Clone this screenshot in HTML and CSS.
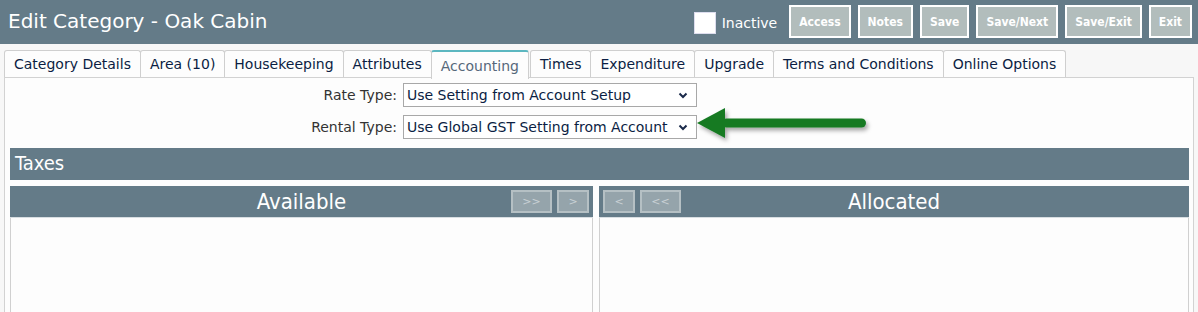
FILE: index.html
```html
<!DOCTYPE html>
<html lang="en">
<head>
    <meta charset="UTF-8">
    <meta name="viewport" content="width=device-width, initial-scale=1.0">
    <title>Edit Category</title>
    <link rel="stylesheet" href="styles.css">
</head>
<body>
    <div class="topbar">
        <div class="title">Edit Category - Oak Cabin</div>
        <div class="actions">
            <label class="inactive"><span class="check"></span>Inactive</label>
            <button class="act">Access</button>
            <button class="act">Notes</button>
            <button class="act">Save</button>
            <button class="act">Save/Next</button>
            <button class="act">Save/Exit</button>
            <button class="act">Exit</button>
        </div>
    </div>

    <div class="tabs">
        <div class="tab">Category Details</div>
        <div class="tab">Area (10)</div>
        <div class="tab">Housekeeping</div>
        <div class="tab">Attributes</div>
        <div class="tab active">Accounting</div>
        <div class="tab">Times</div>
        <div class="tab">Expenditure</div>
        <div class="tab">Upgrade</div>
        <div class="tab">Terms and Conditions</div>
        <div class="tab">Online Options</div>
    </div>

    <div class="panel">
        <div class="form">
            <div class="label">Rate Type:</div>
            <div class="select">
                <span>Use Setting from Account Setup</span>
                <svg class="chev" width="10" height="7" viewBox="0 0 10 7"><path d="M1.5 1.5 L5 5 L8.5 1.5" fill="none" stroke="#1a2a4a" stroke-width="2"/></svg>
            </div>
            <div class="label">Rental Type:</div>
            <div class="select">
                <span>Use Global GST Setting from Account</span>
                <svg class="chev" width="10" height="7" viewBox="0 0 10 7"><path d="M1.5 1.5 L5 5 L8.5 1.5" fill="none" stroke="#1a2a4a" stroke-width="2"/></svg>
            </div>
            <!-- callout arrow pointing at the rental type -->
            <svg class="pointer" width="190" height="44" viewBox="0 0 190 44">
                <defs>
                    <filter id="sh" x="-10%" y="-30%" width="130%" height="180%">
                        <feDropShadow dx="2" dy="3" stdDeviation="2" flood-color="#000" flood-opacity="0.35"/>
                    </filter>
                </defs>
                <g filter="url(#sh)" fill="#167a24">
                    <polygon points="3,20 31,5 31,35"/>
                    <rect x="28" y="15.5" width="144" height="9" rx="4.5"/>
                </g>
            </svg>
        </div>

        <div class="section">Taxes</div>

        <div class="lists">
            <div class="list">
                <div class="list-head">
                    <span class="list-title">Available</span>
                    <div class="movers right">
                        <button class="mv wide">&gt;&gt;</button>
                        <button class="mv">&gt;</button>
                    </div>
                </div>
                <div class="list-body"></div>
            </div>
            <div class="list">
                <div class="list-head">
                    <div class="movers left">
                        <button class="mv">&lt;</button>
                        <button class="mv wide">&lt;&lt;</button>
                    </div>
                    <span class="list-title">Allocated</span>
                </div>
                <div class="list-body"></div>
            </div>
        </div>
    </div>
</body>
</html>
```

FILE: styles.css
```css
body {
    margin: 0;
    height: 312px;
    font-family: 'DejaVu Sans', Verdana, sans-serif;
    background: #f7f7f7;
    color: #0b1e43;
    overflow: hidden;
}

.topbar {
    height: 44px;
    background: #647b88;
    display: flex;
    justify-content: space-between;
    align-items: center;
    padding: 0 6px 0 8px;
}

.title {
    color: #fff;
    font-size: 20px;
    margin-top: -2px;
}

.actions {
    display: flex;
    align-items: center;
    gap: 7px;
}

.inactive {
    display: flex;
    align-items: center;
    color: #fff;
    font-size: 14px;
    margin-right: 5px;
    margin-top: 2px;
}

.check {
    width: 20px;
    height: 20px;
    background: #fff;
    border: 1px solid #dde;
    margin-right: 6px;
}

.act {
    height: 33px;
    padding: 0 8px;
    background: #b2bdbc;
    border: 2px solid #fff;
    color: #fff;
    font-family: 'DejaVu Sans Condensed', 'DejaVu Sans', sans-serif;
    font-weight: bold;
    font-size: 12px;
    margin-top: -1px;
}

.tabs {
    display: flex;
    padding: 6px 0 0 4px;
    height: 27px;
}

.tab {
    height: 26px;
    line-height: 26px;
    padding: 0 9px;
    font-size: 14px;
    background: #fdfdfd;
    border: 1px solid #cfcfcf;
    border-bottom: none;
    border-radius: 3px 3px 0 0;
    margin-right: -1px;
    position: relative;
    z-index: 1;
}

.tab.active {
    color: #56687a;
    border-top: 2px solid #5cb7c0;
    height: 27px;
    line-height: 29px;
    margin-right: 1px;
}

.panel {
    margin: 0 4px;
    border: 1px solid #d2d2d2;
    background: #fdfdfd;
    padding: 5px 4px 0 5px;
}

.form {
    display: grid;
    grid-template-columns: 387px 294px;
    row-gap: 8px;
    column-gap: 6px;
    align-items: center;
    position: relative;
}

.label {
    text-align: right;
    font-size: 14px;
    color: #333;
}

.select {
    height: 22px;
    border: 1px solid #a8a8a8;
    background: #fff;
    display: flex;
    align-items: center;
    justify-content: space-between;
    padding: 0 8px 0 3px;
    font-size: 14px;
    color: #0b1e43;
    white-space: nowrap;
    overflow: hidden;
}

.chev {
    flex: none;
}

.pointer {
    position: absolute;
    left: 684px;
    top: 20px;
}

.section {
    margin-top: 9px;
    height: 32px;
    line-height: 31px;
    background: #647b88;
    color: #fff;
    font-family: 'DejaVu Sans Condensed', 'DejaVu Sans', sans-serif;
    font-size: 20px;
    padding-left: 5px;
}

.lists {
    display: grid;
    grid-template-columns: 583px 1fr;
    gap: 6px;
    margin-top: 6px;
}

.list {
    display: flex;
    flex-direction: column;
}

.list-head {
    height: 31px;
    background: #647b88;
    position: relative;
    display: flex;
    align-items: center;
    justify-content: center;
    border-bottom: 1px solid #d8dee2;
}

.list-title {
    color: #fff;
    font-family: 'DejaVu Sans Condensed', 'DejaVu Sans', sans-serif;
    font-size: 22px;
}

.movers {
    position: absolute;
    top: 4px;
    display: flex;
    gap: 5px;
}

.movers.right {
    right: 4px;
}

.movers.left {
    left: 4px;
}

.mv {
    width: 32px;
    height: 23px;
    padding: 0;
    background: #95a4ab;
    border: 2px solid #b5c0c4;
    color: #c9d1d5;
    font-size: 11px;
    font-family: 'DejaVu Sans', sans-serif;
}

.mv.wide {
    width: 41px;
}

.list-body {
    height: 94px;
    background: #fdfdfd;
    border: 1px solid #d0d0d0;
    border-top: none;
}
```
